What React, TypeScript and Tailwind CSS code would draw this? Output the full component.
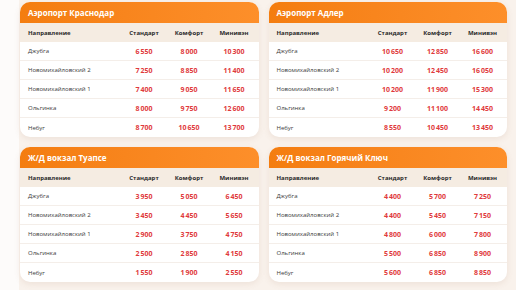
import React from "react";

type Row = [string, string, string, string];
type Card = { title: string; rows: Row[] };

const N = "\u202F";
const f = (s: string) => s.replace(" ", N);

const cards: Card[] = [
  {
    title: "Аэропорт Краснодар",
    rows: [
      ["Джубга", "6 550", "8 000", "10 300"],
      ["Новомихайловский 2", "7 250", "8 850", "11 400"],
      ["Новомихайловский 1", "7 400", "9 050", "11 650"],
      ["Ольгинка", "8 000", "9 750", "12 600"],
      ["Небуг", "8 700", "10 650", "13 700"],
    ],
  },
  {
    title: "Аэропорт Адлер",
    rows: [
      ["Джубга", "10 650", "12 850", "16 600"],
      ["Новомихайловский 2", "10 200", "12 450", "16 050"],
      ["Новомихайловский 1", "10 200", "11 900", "15 300"],
      ["Ольгинка", "9 200", "11 100", "14 450"],
      ["Небуг", "8 550", "10 450", "13 450"],
    ],
  },
  {
    title: "Ж/Д вокзал Туапсе",
    rows: [
      ["Джубга", "3 950", "5 050", "6 450"],
      ["Новомихайловский 2", "3 450", "4 450", "5 650"],
      ["Новомихайловский 1", "2 900", "3 750", "4 750"],
      ["Ольгинка", "2 500", "2 850", "4 150"],
      ["Небуг", "1 550", "1 900", "2 550"],
    ],
  },
  {
    title: "Ж/Д вокзал Горячий Ключ",
    rows: [
      ["Джубга", "4 400", "5 700", "7 250"],
      ["Новомихайловский 2", "4 400", "5 450", "7 150"],
      ["Новомихайловский 1", "4 800", "6 000", "7 800"],
      ["Ольгинка", "5 500", "6 850", "8 900"],
      ["Небуг", "5 600", "6 850", "8 850"],
    ],
  },
];

function PriceCard({ card }: { card: Card }) {
  return (
    <div className="bg-white rounded-[10px] overflow-hidden shadow-[0_2px_6px_rgba(160,110,70,0.12)] flex flex-col">
      <div className="h-[21px] flex items-center pl-2 bg-gradient-to-r from-[#f47d0f] to-[#fd8f2a] text-white text-[8px] font-bold leading-none">
        {card.title}
      </div>
      <div className="h-[19px] grid grid-cols-[1fr_45px_45px_45px] items-center pl-2 pr-[2px] bg-[#f5ece2] text-[6px] font-bold text-[#2a2a2a] leading-none">
        <div>Направление</div>
        <div className="text-center">Стандарт</div>
        <div className="text-center">Комфорт</div>
        <div className="text-center">Минивэн</div>
      </div>
      {card.rows.map((r, i) => (
        <div
          key={i}
          className={
            "h-[19px] grid grid-cols-[1fr_45px_45px_45px] items-center pl-2 pr-[2px] leading-none " +
            (i < card.rows.length - 1 ? "border-b border-[#f4eee9]" : "")
          }
        >
          <div className="text-[6px] text-[#3a3a3a]">{r[0]}</div>
          <div className="text-center text-[7px] font-bold text-[#df3a3c]">{f(r[1])}</div>
          <div className="text-center text-[7px] font-bold text-[#df3a3c]">{f(r[2])}</div>
          <div className="text-center text-[7px] font-bold text-[#df3a3c]">{f(r[3])}</div>
        </div>
      ))}
    </div>
  );
}

export default function App() {
  return (
    <div
      className="w-[516px] h-[290px] flex bg-[#fdfbfa] overflow-hidden"
      style={{ fontFamily: '"Open Sans", "Noto Sans", sans-serif' }}
    >
      <div className="w-[19px] shrink-0" />
      <div className="flex-1 bg-[#f9f2ec] pt-[2px] pl-[1px] pr-[9px]">
        <div className="grid grid-cols-2 gap-x-[10px] gap-y-[10px]">
          {cards.map((c, i) => (
            <PriceCard key={i} card={c} />
          ))}
        </div>
      </div>
    </div>
  );
}
